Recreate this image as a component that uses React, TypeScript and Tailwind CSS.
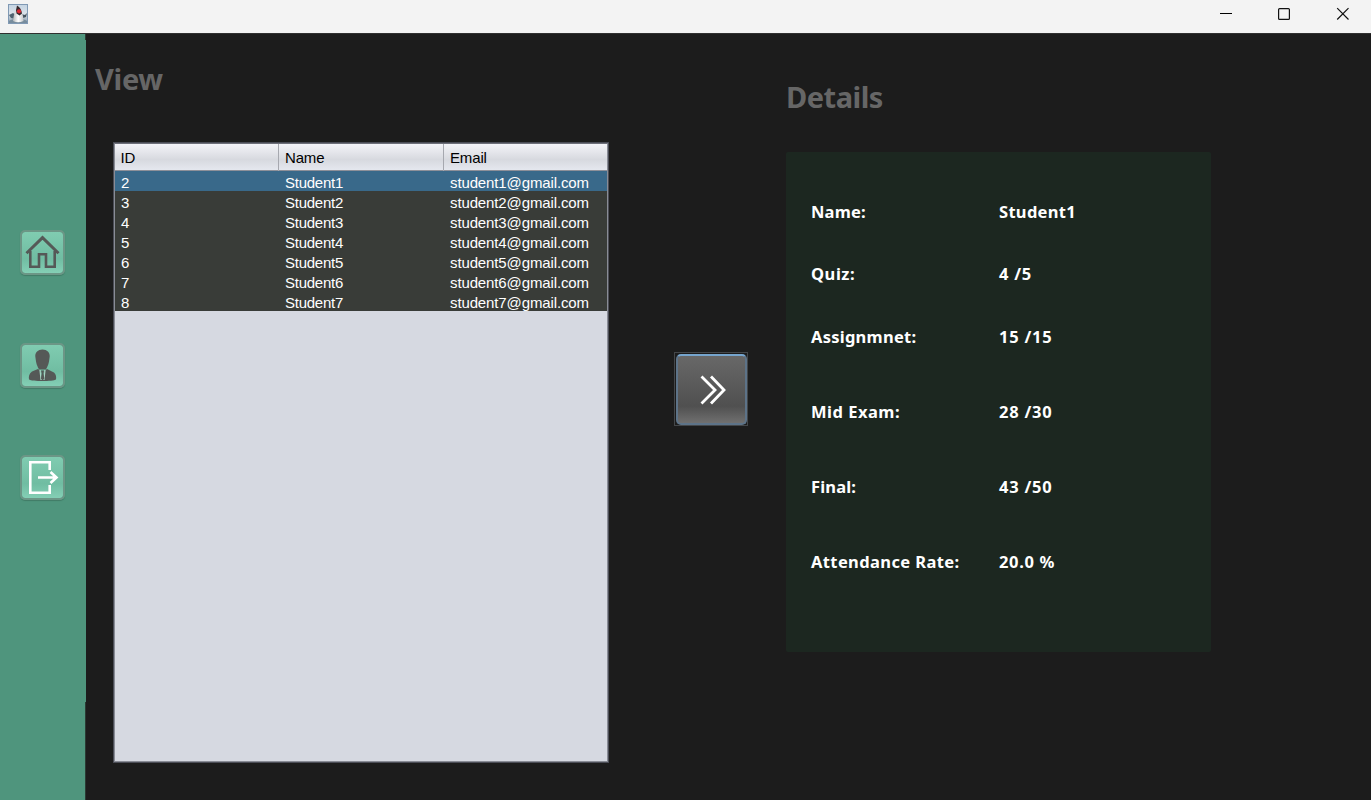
import type { ReactNode } from "react";

const students = [1, 2, 3, 4, 5, 6, 7].map((n) => ({
  id: n + 1,
  name: `Student${n}`,
  email: `student${n}@gmail.com`,
}));

const details = [
  { label: "Name:", value: "Student1", row: "h-[62px]", labelSpacing: "tracking-[0.2px]", valueSpacing: "tracking-[0.3px]" },
  { label: "Quiz:", value: "4 /5", row: "h-[63px]", labelSpacing: "tracking-[0.55px]", valueSpacing: "tracking-[0.75px]" },
  { label: "Assignmnet:", value: "15 /15", row: "h-[75px]", labelSpacing: "tracking-[0.25px]", valueSpacing: "tracking-[0.75px]" },
  { label: "Mid Exam:", value: "28 /30", row: "h-[75px]", labelSpacing: "tracking-[0.5px]", valueSpacing: "tracking-[0.75px]" },
  { label: "Final:", value: "43 /50", row: "h-[75px]", labelSpacing: "tracking-[0.15px]", valueSpacing: "tracking-[0.75px]" },
  { label: "Attendance Rate:", value: "20.0", unit: "%", row: "h-[24px]", labelSpacing: "tracking-[0.38px]", valueSpacing: "tracking-[0.65px]" },
];

function JavaIcon() {
  return (
    <svg width="20" height="20" viewBox="0 0 20 20">
      <defs>
        <linearGradient id="sky" x1="0" y1="0" x2="0" y2="1">
          <stop offset="0" stopColor="#c3d3e2" />
          <stop offset="0.5" stopColor="#dce3ea" />
          <stop offset="1" stopColor="#8398aa" />
        </linearGradient>
        <linearGradient id="body" x1="0" y1="0" x2="1" y2="0">
          <stop offset="0" stopColor="#b5b8ba" />
          <stop offset="0.5" stopColor="#ffffff" />
          <stop offset="1" stopColor="#c5c8ca" />
        </linearGradient>
      </defs>
      <rect x="0.5" y="0.5" width="19" height="19" fill="url(#sky)" stroke="#8099b4" />
      <path d="M1 11L5 9L8 11L7 15L3 14Z" fill="#4f6270" />
      <path d="M13 10L17 11L19 9L18 13L15 14Z" fill="#45525d" />
      <path d="M1 17C5 14 15 14 19 17V19H1Z" fill="#778c9d" />
      <path d="M9 2C7.5 6 6 9 5 17Q10 19.5 15.5 17C15.5 12 14 6 9 2Z" fill="url(#body)" />
      <path d="M9 1.5C12 3 13.5 6 14 9.5L11.5 11.5L8.5 9.5L8 6Z" fill="#35282c" />
      <circle cx="11" cy="7.3" r="2.1" fill="#dc2935" />
    </svg>
  );
}

function SideButton({ children }: { children: ReactNode }) {
  return (
    <button className="flex size-[45px] items-center justify-center rounded-[5px] border-2 border-[#6c9686] bg-linear-to-b from-[#80ccb1] via-[#70bda2] via-65% to-[#84cfb5] bg-clip-padding shadow-[0_1px_1px_#417b66]">
      {children}
    </button>
  );
}

function HomeIcon() {
  return (
    <svg width="41" height="41" viewBox="0 0 41 41" fill="none" stroke="#555957" strokeWidth="2.6">
      <path d="M4.5 21.3L20.5 5.7L36.5 21.3" strokeWidth="3" />
      <path d="M8.3 19V34.7H17V22.2H24V34.7H32.7V19" />
    </svg>
  );
}

function PersonIcon() {
  return (
    <svg width="41" height="41" viewBox="0 0 41 41" fill="#555957">
      <path d="M20.5 4.5C25 4.5 28 7.5 27.7 11.5L27 16.5C26 21.5 24.5 23 24 24.5H17C16.5 23 15 21.5 14 16.5L13.3 11.5C13 7.5 16 4.5 20.5 4.5Z" />
      <path d="M16 24L18 25.5L20.5 35L23 25.5L25 24L32 27.5C34 29.5 34.5 32 34 34.5C31 36.5 10 36.5 7 34.5C6.5 31.5 7 28.5 10 26.5Z" />
      <path d="M18 25L19 34.5H22L23 25" fill="none" stroke="#a9d5c5" strokeWidth="1.2" />
      <path d="M19 25.5H22L21.5 28.5L22.3 33.5L20.5 36L19 33.5L19.7 28.5Z" />
    </svg>
  );
}

function ExitIcon() {
  return (
    <svg width="41" height="41" viewBox="0 0 41 41" fill="none" stroke="#fff" strokeWidth="2.6">
      <path d="M27.7 13V5.3H8.3V35.7H27.7V28" />
      <path d="M16 20.5H35M28.5 15L34.5 20.5L28.5 26" />
    </svg>
  );
}

export default function App() {
  return (
    <div className="flex h-[800px] w-[1371px] flex-col overflow-hidden bg-[#1c1c1c] font-['Liberation_Sans',sans-serif]">
      <header className="flex h-[33px] shrink-0 items-start justify-between bg-[#f3f3f3] pt-1 pr-[22px] pl-2">
        <JavaIcon />
        <svg width="130" height="20" viewBox="0 0 130 20" fill="none" stroke="#111" strokeWidth="1.2">
          <path d="M1 9.5H13" stroke="#000" strokeWidth="1" shapeRendering="crispEdges" />
          <rect x="59.6" y="4.6" width="10.8" height="10.8" rx="1" />
          <path d="M118.2 4.2L129.5 15.5M129.5 4.2L118.2 15.5" />
        </svg>
      </header>
      <div className="flex h-[767px] border-t border-[#303030]">
        <aside className="flex w-[85px] shrink-0 flex-col items-center bg-[#4f957d] pt-[196px]">
          <div className="flex flex-col gap-[67.5px]">
            <SideButton><HomeIcon /></SideButton>
            <SideButton><PersonIcon /></SideButton>
            <SideButton><ExitIcon /></SideButton>
          </div>
        </aside>
        <div className="flex w-px shrink-0 flex-col bg-[#2b3b34] pt-[6px]">
          <div className="h-[662px] w-px bg-[#4f957d]" />
        </div>
        <section className="w-[588px] shrink-0 pt-[25px]">
          <h1 className="h-[83px] pl-[9px] font-['Noto_Sans',sans-serif] text-[29px] leading-[40px] font-bold tracking-[-0.3px] text-[#666]">View</h1>
          <div className="ml-[27px] h-[621px] w-[496px] border border-[#4b4d56] bg-[#d6d9e1]">
            <div className="h-full border border-[#898c95] border-t-[#6d6f79]">
              <div className="grid h-[27px] grid-cols-[164px_165px_163px] border-b border-[#8e9099] bg-linear-to-b from-[#f4f4f8] via-[#d7d9df] via-60% to-[#e5e8ef] text-[15px] leading-[27px] tracking-[-0.15px] text-black">
                <span className="border-r border-[#a6a8af] pl-[5.5px]">ID</span>
                <span className="border-r border-[#a6a8af] pl-[6px]">Name</span>
                <span className="pl-[6px]">Email</span>
              </div>
              {students.map((s) => (
                <div key={s.id} className={`grid h-5 grid-cols-[164px_165px_163px] overflow-hidden pt-[2px] text-[15px] leading-5 text-white ${s.id === 2 ? "bg-[#39698a]" : "bg-[#393c38]"}`}>
                  <span className="pl-[6px]">{s.id}</span>
                  <span className="pl-[6px] tracking-[-0.25px]">{s.name}</span>
                  <span className="pl-[6px] tracking-[-0.12px]">{s.email}</span>
                </div>
              ))}
            </div>
          </div>
        </section>
        <div className="w-[112px] shrink-0 pt-[318px]">
          <button className="flex size-[74px] items-start justify-start border border-[#44474a] bg-[#1c1c1c] pt-px pl-px">
            <span className="flex size-[71px] rounded-[5px] border-2 border-[#5d7388] border-t-[#76a5ce] bg-linear-to-b from-[#686868] via-[#505050] via-75% to-[#707070]">
              <svg width="67" height="67" viewBox="0 0 67 67" fill="none" stroke="#fff" strokeWidth="2.8">
                <path d="M23.5 20.5L37 34L23.5 47.5M33 20.5L46 34L33 47.5" />
              </svg>
            </span>
          </button>
        </div>
        <section className="w-[425px] shrink-0 pt-[43px] font-['Noto_Sans',sans-serif] font-bold">
          <h1 className="h-[75px] text-[29px] leading-[40px] tracking-[-0.5px] text-[#666]">Details</h1>
          <div className="h-[500px] rounded-[2px] bg-[#1c2720] pt-[48px] pl-[25px] text-[16.5px] leading-6 text-white">
            {details.map((d) => (
              <div key={d.label} className={`grid grid-cols-[188px_1fr] ${d.row}`}>
                <span className={d.labelSpacing}>{d.label}</span>
                <span className={d.valueSpacing}>
                  {d.value}
                  {d.unit && ` ${d.unit}`}
                </span>
              </div>
            ))}
          </div>
        </section>
      </div>
    </div>
  );
}
